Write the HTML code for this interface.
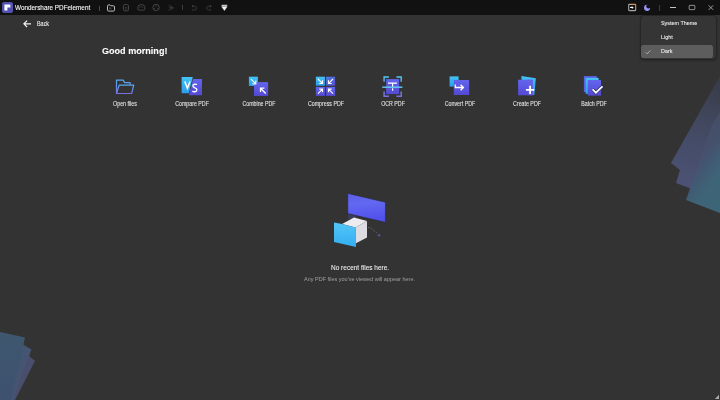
<!DOCTYPE html>
<html><head><meta charset="utf-8">
<style>
html,body{margin:0;padding:0;}
body{width:720px;height:400px;overflow:hidden;background:#333333;-webkit-font-smoothing:antialiased;font-family:"Liberation Sans",sans-serif;position:relative;}
.abs{position:absolute;}
#tb{left:0;top:0;width:720px;height:15px;background:#111111;}
.t{position:absolute;white-space:nowrap;line-height:1;-webkit-text-stroke:0.08px currentColor;}
#deco{left:0;top:0;}
.lbl{-webkit-text-stroke:0.08px currentColor;position:absolute;top:99.8px;width:80px;margin-left:-40px;text-align:center;color:#e6e6e6;font-size:6.6px;line-height:8px;transform:scaleX(.8);}
.ico{position:absolute;}
#menu{left:640.5px;top:15.5px;width:75px;height:43.5px;background:#353535;border-radius:3px;box-shadow:0 0 0 .7px #252525,0 1px 3px rgba(0,0,0,.45);}
</style></head><body>
<svg id="deco" class="abs" width="720" height="400" viewBox="0 0 720 400">
  <defs>
    <linearGradient id="gRA" x1="715" y1="80" x2="678" y2="175" gradientUnits="userSpaceOnUse"><stop offset="0" stop-color="#383b48"/><stop offset=".3" stop-color="#3f4558"/><stop offset=".7" stop-color="#464d6a"/><stop offset="1" stop-color="#4a5172"/></linearGradient>
    <linearGradient id="gRC" x1="700" y1="160" x2="720" y2="175" gradientUnits="userSpaceOnUse"><stop offset="0" stop-color="#465470" stop-opacity=".6"/><stop offset=".5" stop-color="#405c74"/><stop offset="1" stop-color="#3e6577"/></linearGradient>
    <linearGradient id="gLF" x1="0" y1="330" x2="20" y2="400" gradientUnits="userSpaceOnUse"><stop offset="0" stop-color="#3e586e"/><stop offset="1" stop-color="#3e5170"/></linearGradient>
  </defs>
  <!-- right fan -->
  <polygon points="720,76 671,163 680,170 676,183 689,188 720,200" fill="url(#gRA)"/>
  <polygon points="720,112 712,125 686,200 720,213" fill="url(#gRC)"/>
  <polygon points="714.8,399 719,394.8 719,399" fill="#a4a8a8"/>
  <!-- bottom-left fan -->
  <polygon points="0,338 28,355 35,361 15,400 0,400" fill="#494e6c"/>
  <polygon points="0,335 24,345 31.5,349.5 13,400 0,400" fill="#455470"/>
  <polygon points="0,332 25,337.5 11,400 0,400" fill="url(#gLF)"/>
</svg>

<div id="tb" class="abs">
  <svg class="abs" style="left:1.5px;top:1.5px" width="11" height="11" viewBox="0 0 11 11">
    <rect x="0.3" y="0.3" width="10.4" height="10.4" rx="2" fill="#4f50b8" stroke="#6668d0" stroke-width="0.6"/>
    <path d="M2.4 2.6h6v3h-3v3h-3z" fill="#fff"/>
  </svg>
  <div class="t" style="left:14.5px;top:5.2px;font-size:6.6px;color:#ffffff;transform:scaleX(.965);transform-origin:0 0;">Wondershare PDFelement</div>
  <div class="abs" style="left:99px;top:5.5px;width:0.9px;height:5px;background:#4a4a4a;"></div>
  <svg class="abs" style="left:105px;top:2px" width="12" height="11" viewBox="0 0 12 11">
    <path d="M2.5 4.2Q2.5 2.9 3.7 2.9H5L5.9 3.8H8.4Q9.5 3.8 9.5 5V7.9Q9.5 9.1 8.4 9.1H3.6Q2.5 9.1 2.5 7.9Z" fill="none" stroke="#bcbcbc" stroke-width="1"/>
    <path d="M4.6 5v2.4M4.6 6.2h1.4v1.2" fill="none" stroke="#666" stroke-width=".6"/>
  </svg>
  <svg class="abs" style="left:121px;top:2px" width="10" height="11" viewBox="0 0 10 11">
    <rect x="2.4" y="2.6" width="5.1" height="6.3" rx="1.2" fill="none" stroke="#4a4a4a" stroke-width="0.9"/>
    <rect x="4.1" y="5.4" width="1.8" height="2.2" fill="none" stroke="#3e3e3e" stroke-width="0.6"/>
  </svg>
  <svg class="abs" style="left:136px;top:2px" width="10" height="11" viewBox="0 0 10 11">
    <path d="M1.8 5.2Q1.8 2.6 5.3 2.6Q8.8 2.6 8.8 5.2V7.1Q8.8 8.1 7.8 8.1H2.8Q1.8 8.1 1.8 7.1Z" fill="none" stroke="#4a4a4a" stroke-width="0.9"/>
    <path d="M3.6 5.9Q3.9 4.6 5.3 4.6Q6.7 4.6 7 5.9" fill="none" stroke="#444" stroke-width="0.7"/>
  </svg>
  <svg class="abs" style="left:151px;top:2px" width="10" height="11" viewBox="0 0 10 11">
    <circle cx="5.1" cy="5.5" r="3.2" fill="none" stroke="#4a4a4a" stroke-width="0.9"/>
    <path d="M5.1 2.4v2.2M2.4 7.1l2-1.1M7.8 7.1l-2-1.1" fill="none" stroke="#444" stroke-width="0.7"/>
  </svg>
  <svg class="abs" style="left:167px;top:2px" width="9" height="11" viewBox="0 0 9 11">
    <path d="M1.8 3.2l4.6 2.6l-4.6 2.6M1.8 5.8h4" fill="none" stroke="#3e3e3e" stroke-width="0.9"/>
  </svg>
  <div class="abs" style="left:182px;top:5.3px;width:0.9px;height:5px;background:#3e3e3e;"></div>
  <svg class="abs" style="left:190px;top:2px" width="8" height="11" viewBox="0 0 8 11">
    <path d="M2 4.2h2.6c1.3 0 2 .7 2 1.8s-.7 1.9-2 1.9h-2.5M2 4.2l1.2-1M2 4.2l1.2 1" fill="none" stroke="#464646" stroke-width="0.8"/>
  </svg>
  <svg class="abs" style="left:205px;top:2px" width="8" height="11" viewBox="0 0 8 11">
    <path d="M6.2 4.2h-2.6c-1.3 0-2 .7-2 1.8s.7 1.9 2 1.9h2.5M6.2 4.2l-1.2-1M6.2 4.2l-1.2 1" fill="none" stroke="#464646" stroke-width="0.8"/>
  </svg>
  <svg class="abs" style="left:220px;top:2px" width="9" height="11" viewBox="0 0 9 11">
    <rect x="1.6" y="2.8" width="5.6" height="1" fill="#f4f4f4"/>
    <path d="M1.6 4.6h5.6l-2.8 4z" fill="#f4f4f4" stroke="#f4f4f4" stroke-width=".4" stroke-linejoin="round"/>
  </svg>
  <!-- right side -->
  <svg class="abs" style="left:626px;top:2px" width="12" height="11" viewBox="0 0 12 11">
    <defs><linearGradient id="gOr" x1="0" y1="1" x2="1" y2="0"><stop offset="0" stop-color="#a0a0a0"/><stop offset=".55" stop-color="#a8a8a8"/><stop offset="1" stop-color="#e0904a"/></linearGradient></defs>
    <rect x="2.7" y="2.4" width="7" height="6.2" rx=".6" fill="none" stroke="url(#gOr)" stroke-width="1.1"/>
    <path d="M4 5.5h3.2M5.9 4.4l1.1 1.1l-1.1 1.1" fill="none" stroke="#f4f4f4" stroke-width="1"/>
  </svg>
  <svg class="abs" style="left:642px;top:3px" width="10" height="10" viewBox="0 0 10 10">
    <defs><mask id="mMoon"><rect width="10" height="10" fill="#fff"/><circle cx="6.6" cy="3.3" r="2.3" fill="#000"/></mask></defs>
    <circle cx="5.1" cy="4.8" r="3.1" fill="#9794f4" mask="url(#mMoon)"/>
  </svg>
  <div class="abs" style="left:659px;top:5px;width:0.9px;height:5.8px;background:#3c3c3c;"></div>
  <div class="abs" style="left:670.3px;top:6.8px;width:5.9px;height:0.8px;background:#c4c4c4;"></div>
  <svg class="abs" style="left:686px;top:3px" width="11" height="9" viewBox="0 0 11 9">
    <rect x="3.15" y="2.35" width="5.7" height="4.3" rx=".7" fill="none" stroke="#c4c4c4" stroke-width="0.7"/>
  </svg>
  <svg class="abs" style="left:707px;top:3px" width="8" height="9" viewBox="0 0 8 9">
    <path d="M1.6 2.3l4.6 4.6M6.2 2.3l-4.6 4.6" stroke="#c4c4c4" stroke-width="0.75"/>
  </svg>
</div>

<div class="t" style="left:102px;top:46px;font-size:9.8px;font-weight:bold;color:#ffffff;transform:scaleX(.925);transform-origin:0 0;">Good morning!</div>

<svg class="abs" style="left:21px;top:17.5px" width="12" height="11" viewBox="0 0 12 11">
  <path d="M3 5.8h7M6.1 2.6l-3.2 3.2l3.2 3.2" fill="none" stroke="#f2f2f2" stroke-width="1.2"/>
</svg>
<div class="t" style="left:36.9px;top:20.6px;font-size:6.4px;color:#f0f0f0;transform:scaleX(.85);transform-origin:0 0;">Back</div>


<svg class="abs" width="0" height="0" style="left:0;top:0">
 <defs>
  <linearGradient id="gFold" x1="0" y1="0" x2="0" y2="1"><stop offset="0" stop-color="#58a8f0"/><stop offset="1" stop-color="#7b6fe6"/></linearGradient>
  <linearGradient id="gCy" x1="0" y1="0" x2="0" y2="1"><stop offset="0" stop-color="#45c2f6"/><stop offset="1" stop-color="#2a9ee8"/></linearGradient>
  <linearGradient id="gPu" x1="0" y1="0" x2="0" y2="1"><stop offset="0" stop-color="#6265ec"/><stop offset="1" stop-color="#5449d4"/></linearGradient>
  <linearGradient id="gPu2" x1="0" y1="0" x2="1" y2="1"><stop offset="0" stop-color="#4e7ce0"/><stop offset="1" stop-color="#5a4ed2"/></linearGradient>
  <linearGradient id="gBr" x1="0" y1="0" x2="0" y2="1"><stop offset="0" stop-color="#52c8f2"/><stop offset="1" stop-color="#7a70e4"/></linearGradient>
 </defs>
</svg>
<!-- Open files -->
<svg class="abs" style="left:112px;top:76px" width="25" height="21" viewBox="0 0 25 21">
  <path d="M4.5 17.5V4.2h6.6l1.6 2.4h5.4v2.3" fill="none" stroke="url(#gFold)" stroke-width="1.2" stroke-linejoin="round"/>
  <path d="M4.5 17.5L7.2 9.1h14.5l-2 8.4z" fill="none" stroke="url(#gFold)" stroke-width="1.2" stroke-linejoin="round"/>
</svg>
<!-- Compare -->
<svg class="abs" style="left:178px;top:74px" width="28" height="24" viewBox="0 0 28 24">
  <polygon points="3.6,3 14.8,3 10.8,19.2 3.6,19.2" fill="url(#gCy)"/>
  <polygon points="15,5.1 24,5.1 24,21.3 10.8,21.3" fill="url(#gPu)"/>
  <path d="M6.8 7.4l2.6 6.9l2.6-6.9" fill="none" stroke="#fff" stroke-width="1.5"/>
  <path d="M18.9 10.9C18.1 9.9 14.9 9.6 14.9 12.1C14.9 14.2 18.9 13.5 18.9 15.7C18.9 18.2 15.4 18.1 14.5 17" fill="none" stroke="#fff" stroke-width="1.4"/>
</svg>
<!-- Combine -->
<svg class="abs" style="left:245px;top:74px" width="28" height="24" viewBox="0 0 28 24">
  <rect x="3.9" y="2.7" width="9" height="9.3" fill="url(#gCy)"/>
  <rect x="9" y="8.1" width="14.1" height="13.8" fill="url(#gPu)"/>
  <path d="M6 5.1l4.3 4.3M10.8 6.5v3.4h-3.4" fill="none" stroke="#e8f8ff" stroke-width="1.2"/>
  <path d="M20.7 19.5l-5.2-5.2M15.5 18v-3.9h3.9" fill="none" stroke="#fff" stroke-width="1.3"/>
</svg>
<!-- Compress -->
<svg class="abs" style="left:312px;top:74px" width="28" height="24" viewBox="0 0 28 24">
  <rect x="3.9" y="2.7" width="9" height="9" fill="url(#gCy)"/>
  <rect x="14.1" y="2.7" width="9" height="9" fill="url(#gPu2)"/>
  <rect x="3.9" y="12.9" width="9" height="9" fill="url(#gPu)"/>
  <rect x="14.1" y="12.9" width="9" height="9" fill="url(#gPu)"/>
  <path d="M6 5l4.3 4.3M10.5 6.3v3.2h-3.2" fill="none" stroke="#fff" stroke-width="1.1"/>
  <path d="M21 5l-4.3 4.3M16.5 6.3v3.2h3.2" fill="none" stroke="#fff" stroke-width="1.1"/>
  <path d="M6 19.6l4.3-4.3M7.3 15.1h3.2v3.2" fill="none" stroke="#fff" stroke-width="1.1"/>
  <path d="M21 19.6l-4.3-4.3M19.7 15.1h-3.2v3.2" fill="none" stroke="#fff" stroke-width="1.1"/>
</svg>
<!-- OCR -->
<svg class="abs" style="left:379px;top:74px" width="28" height="24" viewBox="0 0 28 24">
  <rect x="7.2" y="5.1" width="12.9" height="15" fill="url(#gPu)"/>
  <path d="M5.1 7.8V3h4.8M17.4 3h4.8v4.8M5.1 17.4v4.8h4.8M17.4 22.2h4.8v-4.8" fill="none" stroke="url(#gBr)" stroke-width="1.4"/>
  <path d="M9 9.2h9M13.6 9.2v3.8M13.6 14.2v2.6" fill="none" stroke="#fff" stroke-width="1.2"/>
  <path d="M3.3 13.2h20.1" stroke="#5fd0f6" stroke-width="1.4"/>
</svg>
<!-- Convert -->
<svg class="abs" style="left:446px;top:74px" width="28" height="24" viewBox="0 0 28 24">
  <rect x="3.6" y="2.4" width="9" height="10.2" fill="url(#gCy)"/>
  <rect x="7.8" y="6" width="15.3" height="15" fill="url(#gPu)"/>
  <path d="M9.3 10.5v3h8.6M14.6 10.8l2.8 2.7l-2.8 2.7" fill="none" stroke="#fff" stroke-width="1.3"/>
</svg>
<!-- Create -->
<svg class="abs" style="left:513px;top:74px" width="28" height="24" viewBox="0 0 28 24">
  <polygon points="8.4,2.1 22.8,4.2 21.3,21 9.5,21" fill="url(#gCy)"/>
  <polygon points="5.1,5.7 19.8,5.7 19.8,21.3 5.1,21.3" fill="url(#gPu)"/>
  <rect x="14.7" y="5.7" width="5.1" height="15.6" fill="#6a62e2" opacity=".6"/>
  <path d="M12.9 15.9h8.4M17.1 11.7v8.4" fill="none" stroke="#fff" stroke-width="1.8"/>
</svg>
<!-- Batch -->
<svg class="abs" style="left:580px;top:74px" width="28" height="24" viewBox="0 0 28 24">
  <rect x="3.9" y="2.1" width="12.9" height="16" fill="#5f62e6"/>
  <rect x="5.7" y="3.9" width="12.9" height="16" fill="url(#gCy)"/>
  <rect x="7.8" y="6" width="13.2" height="15.6" fill="url(#gPu)"/>
  <path d="M12.6 15.4l3.3 3.3l6.6-6.3" fill="none" stroke="#2a2a55" stroke-width="3"/>
  <path d="M12.6 15.4l3.3 3.3l6.6-6.3" fill="none" stroke="#fff" stroke-width="1.7"/>
</svg>
<div class="lbl" style="left:124.5px">Open files</div>
<div class="lbl" style="left:191.5px">Compare PDF</div>
<div class="lbl" style="left:258.5px">Combine PDF</div>
<div class="lbl" style="left:325.5px">Compress PDF</div>
<div class="lbl" style="left:392.5px">OCR PDF</div>
<div class="lbl" style="left:459.5px">Convert PDF</div>
<div class="lbl" style="left:526.5px">Create PDF</div>
<div class="lbl" style="left:593.5px">Batch PDF</div>

<svg class="abs" style="left:325px;top:185px" width="70" height="70" viewBox="325 185 70 70">
  <defs>
    <linearGradient id="gPanel" x1="0" y1="0" x2="0.15" y2="1"><stop offset="0" stop-color="#5c5fe8"/><stop offset=".4" stop-color="#6268f0"/><stop offset="1" stop-color="#5050ec"/></linearGradient>
    <linearGradient id="gBlue" x1="0" y1="0" x2="0" y2="1"><stop offset="0" stop-color="#52c6f7"/><stop offset="1" stop-color="#34aef2"/></linearGradient>
  </defs>
  <polygon points="347.8,193.4 385.4,202.3 385.4,222.3 347.8,213.6" fill="url(#gPanel)" stroke="#262636" stroke-width=".5"/>
  <polygon points="348,214 357,216 354,219 348,219" fill="#3d3f62" opacity=".8"/>
  <polygon points="342,224 354,217.5 367,221 355.5,227.5" fill="#ececf0"/>
  <polygon points="355.5,227.5 367,221 367,237.5 355.5,243.5" fill="#dcdce2"/>
  <polygon points="334,222.5 342,224 355.5,227.5 356,247 334,242" fill="url(#gBlue)"/>
  <path d="M343 224.5v18" stroke="#5ccff9" stroke-width=".5" opacity=".25"/>
  <path d="M368 227.5c2 0 3.5 .8 5 2.2c1 1 2.5 2 4 3" fill="none" stroke="#8a8a9a" stroke-width=".6" stroke-dasharray="1 .9"/>
  <circle cx="379" cy="235.2" r="1.3" fill="#55578a"/>
</svg>
<div class="t" style="left:330.5px;top:265px;font-size:6.5px;color:#f4f4f4;-webkit-text-stroke:0.05px currentColor;transform:scaleX(.999);transform-origin:0 0;">No recent files here.</div>
<div class="t" style="left:304px;top:277px;font-size:5.5px;color:#a0a0a0;-webkit-text-stroke:0;transform:scaleX(.999);transform-origin:0 0;">Any PDF files you've viewed will appear here.</div>

<div id="menu" class="abs">
  <div class="abs" style="left:0.7px;top:29.7px;width:71.5px;height:13px;background:#5d5d5d;border-radius:2.5px;"></div>
  <svg class="abs" style="left:3px;top:32px" width="9" height="8" viewBox="0 0 9 8"><path d="M1.6 4.2l1.6 1.6l3.2-3.4" fill="none" stroke="#cfcfcf" stroke-width="0.7"/></svg>
  <div class="t" style="left:20px;top:5.5px;font-size:5.9px;color:#f0f0f0;transform:scaleX(.92);transform-origin:0 0;">System Theme</div>
  <div class="t" style="left:20px;top:19.5px;font-size:5.9px;color:#f0f0f0;transform:scaleX(.92);transform-origin:0 0;">Light</div>
  <div class="t" style="left:20px;top:33.5px;font-size:5.9px;color:#f0f0f0;transform:scaleX(.92);transform-origin:0 0;">Dark</div>
</div>
</body></html>
